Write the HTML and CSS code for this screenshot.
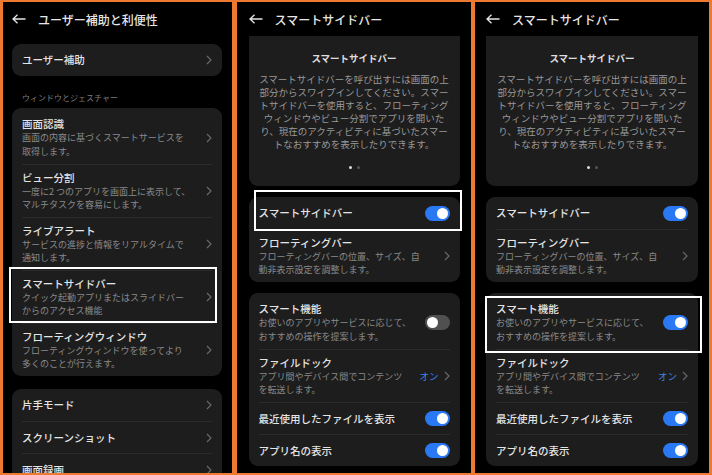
FILE: index.html
```html
<!DOCTYPE html>
<html lang="ja">
<head>
    <meta charset="UTF-8">
    <meta name="viewport" content="width=device-width, initial-scale=1.0">
    <title>スマートサイドバー</title>
    <link rel="stylesheet" href="styles.css">
</head>
<body>
<div class="frame">
    <!-- 1枚目: ユーザー補助と利便性 -->
    <section class="phone phone-a">
        <header class="bar">
            <svg class="back" viewBox="0 0 14 10"><path d="M13.5 5H1M5.5 0.7L1 5l4.5 4.3"/></svg>
            <h1>ユーザー補助と利便性</h1>
        </header>
        <div class="card first">
            <div class="row one"><span class="title">ユーザー補助</span><svg class="chev" viewBox="0 0 6 10"><path d="M1 1l4 4-4 4"/></svg></div>
        </div>
        <p class="group">ウィンドウとジェスチャー</p>
        <div class="card">
            <div class="row two">
                <div class="text"><div class="title">画面認識</div><div class="sub">画面の内容に基づくスマートサービスを<br>取得します。</div></div>
                <svg class="chev" viewBox="0 0 6 10"><path d="M1 1l4 4-4 4"/></svg>
            </div>
            <div class="row two">
                <div class="text"><div class="title">ビュー分割</div><div class="sub">一度に2 つのアプリを画面上に表示して、<br>マルチタスクを容易にします。</div></div>
                <svg class="chev" viewBox="0 0 6 10"><path d="M1 1l4 4-4 4"/></svg>
            </div>
            <div class="row two">
                <div class="text"><div class="title">ライブアラート</div><div class="sub">サービスの進捗と情報をリアルタイムで<br>通知します。</div></div>
                <svg class="chev" viewBox="0 0 6 10"><path d="M1 1l4 4-4 4"/></svg>
            </div>
            <div class="row two">
                <div class="text"><div class="title">スマートサイドバー</div><div class="sub">クイック起動アプリまたはスライドバー<br>からのアクセス機能</div></div>
                <svg class="chev" viewBox="0 0 6 10"><path d="M1 1l4 4-4 4"/></svg>
            </div>
            <div class="row two">
                <div class="text"><div class="title">フローティングウィンドウ</div><div class="sub">フローティングウィンドウを使ってより<br>多くのことが行えます。</div></div>
                <svg class="chev" viewBox="0 0 6 10"><path d="M1 1l4 4-4 4"/></svg>
            </div>
        </div>
        <div class="card wide-gap">
            <div class="row one"><span class="title">片手モード</span><svg class="chev" viewBox="0 0 6 10"><path d="M1 1l4 4-4 4"/></svg></div>
            <div class="row one"><span class="title">スクリーンショット</span><svg class="chev" viewBox="0 0 6 10"><path d="M1 1l4 4-4 4"/></svg></div>
            <div class="row one"><span class="title">画面録画</span><svg class="chev" viewBox="0 0 6 10"><path d="M1 1l4 4-4 4"/></svg></div>
        </div>
        <div class="mark mark-a"></div>
    </section>

    <!-- 2枚目: スマートサイドバー -->
    <section class="phone">
        <header class="bar">
            <svg class="back" viewBox="0 0 14 10"><path d="M13.5 5H1M5.5 0.7L1 5l4.5 4.3"/></svg>
            <h1>スマートサイドバー</h1>
        </header>
        <div class="intro">
            <div class="intro-title">スマートサイドバー</div>
            <p>スマートサイドバーを呼び出すには画面の上<br>部分からスワイプインしてください。スマー<br>トサイドバーを使用すると、フローティング<br>ウィンドウやビュー分割でアプリを開いた<br>り、現在のアクティビティに基づいたスマー<br>トなおすすめを表示したりできます。</p>
            <div class="dots"><i></i><i></i></div>
        </div>
        <div class="card">
            <div class="row one"><span class="title">スマートサイドバー</span><span class="switch"></span></div>
            <div class="row two">
                <div class="text"><div class="title">フローティングバー</div><div class="sub">フローティングバーの位置、サイズ、自<br>動非表示設定を調整します。</div></div>
                <svg class="chev" viewBox="0 0 6 10"><path d="M1 1l4 4-4 4"/></svg>
            </div>
        </div>
        <div class="card">
            <div class="row two">
                <div class="text"><div class="title">スマート機能</div><div class="sub">お使いのアプリやサービスに応じて、<br>おすすめの操作を提案します。</div></div>
                <span class="switch off"></span>
            </div>
            <div class="row two">
                <div class="text"><div class="title">ファイルドック</div><div class="sub">アプリ間やデバイス間でコンテンツ<br>を転送します。</div></div>
                <div class="trail"><span class="value">オン</span><svg class="chev" viewBox="0 0 6 10"><path d="M1 1l4 4-4 4"/></svg></div>
            </div>
            <div class="row one"><span class="title">最近使用したファイルを表示</span><span class="switch"></span></div>
            <div class="row one"><span class="title">アプリ名の表示</span><span class="switch"></span></div>
        </div>
        <div class="mark mark-b"></div>
    </section>

    <!-- 3枚目: スマート機能オン -->
    <section class="phone phone-c">
        <header class="bar">
            <svg class="back" viewBox="0 0 14 10"><path d="M13.5 5H1M5.5 0.7L1 5l4.5 4.3"/></svg>
            <h1>スマートサイドバー</h1>
        </header>
        <div class="intro">
            <div class="intro-title">スマートサイドバー</div>
            <p>スマートサイドバーを呼び出すには画面の上<br>部分からスワイプインしてください。スマー<br>トサイドバーを使用すると、フローティング<br>ウィンドウやビュー分割でアプリを開いた<br>り、現在のアクティビティに基づいたスマー<br>トなおすすめを表示したりできます。</p>
            <div class="dots"><i></i><i></i></div>
        </div>
        <div class="card">
            <div class="row one"><span class="title">スマートサイドバー</span><span class="switch"></span></div>
            <div class="row two">
                <div class="text"><div class="title">フローティングバー</div><div class="sub">フローティングバーの位置、サイズ、自<br>動非表示設定を調整します。</div></div>
                <svg class="chev" viewBox="0 0 6 10"><path d="M1 1l4 4-4 4"/></svg>
            </div>
        </div>
        <div class="card">
            <div class="row two">
                <div class="text"><div class="title">スマート機能</div><div class="sub">お使いのアプリやサービスに応じて、<br>おすすめの操作を提案します。</div></div>
                <span class="switch"></span>
            </div>
            <div class="row two">
                <div class="text"><div class="title">ファイルドック</div><div class="sub">アプリ間やデバイス間でコンテンツ<br>を転送します。</div></div>
                <div class="trail"><span class="value">オン</span><svg class="chev" viewBox="0 0 6 10"><path d="M1 1l4 4-4 4"/></svg></div>
            </div>
            <div class="row one"><span class="title">最近使用したファイルを表示</span><span class="switch"></span></div>
            <div class="row one"><span class="title">アプリ名の表示</span><span class="switch"></span></div>
        </div>
        <div class="mark mark-c"></div>
    </section>
</div>
</body>
</html>
```

FILE: styles.css
```css
*{
    box-sizing: border-box;
}
body{
    margin: 0;
    background-color: #ee7a31;
    font-family: "Noto Sans CJK JP", "Noto Sans", sans-serif;
}
.frame{
    height: 475px;
    padding: 2px 3px;
    display: flex;
    justify-content: space-between;
}

/* 端末画面 */
.phone{
    position: relative;
    width: 234px;
    height: 471px;
    overflow: hidden;
    background-color: #000;
    padding: 0 11px 0 12px;
}
.phone-a{
    width: 229px;
    padding: 0 10px 0 9px;
}
.phone-c{
    padding: 0 11px;
}

.bar{
    height: 34px;
    display: flex;
    align-items: center;
    gap: 12px;
    color: #e6e6e6;
}
.bar h1{
    margin: 0;
    font-size: 12px;
    font-weight: 500;
}
.back{
    width: 14px;
    height: 10px;
    flex: none;
    fill: none;
    stroke: #e6e6e6;
    stroke-width: 1.3;
}

/* カード */
.card{
    background-color: #1d1d1d;
    border-radius: 9px;
    margin-top: 11px;
}
.card.first{
    margin-top: 8px;
}
.card.wide-gap{
    margin-top: 13px;
}
.group{
    margin: 16px 10px 0;
    font-size: 8px;
    line-height: 12px;
    color: #7d7d7d;
}
.group + .card{
    margin-top: 4px;
}

.row{
    margin: 0 10px;
    display: flex;
    align-items: center;
    justify-content: space-between;
}
.row + .row{
    border-top: 1px solid #2b2b2b;
}
.row.one{
    height: 32px;
}
.row.two{
    height: 53px;
}
.row.two:first-child{
    height: 56px;
    padding-top: 3px;
}

.title{
    font-size: 10.5px;
    line-height: 14px;
    font-weight: 500;
    color: #e4e4e4;
}
.sub{
    font-size: 9px;
    line-height: 13.5px;
    color: #8a8a8a;
}
.chev{
    width: 6px;
    height: 10px;
    flex: none;
    fill: none;
    stroke: #6b6b6b;
    stroke-width: 1.1;
}
.trail{
    display: flex;
    align-items: center;
    gap: 5px;
}
.value{
    font-size: 9.5px;
    color: #3a86ee;
}

/* トグル */
.switch{
    position: relative;
    width: 25px;
    height: 15px;
    flex: none;
    border-radius: 8px;
    background-color: #2a79f4;
}
.switch::after{
    content: "";
    position: absolute;
    top: 2px;
    right: 2px;
    width: 11px;
    height: 11px;
    border-radius: 50%;
    background-color: #fff;
}
.switch.off{
    background-color: #505050;
}
.switch.off::after{
    right: auto;
    left: 2px;
}

/* 説明カード（上が切れている） */
.intro{
    height: 150px;
    padding: 15px 10px 0;
    background-color: #1d1d1d;
    border-radius: 0 0 9px 9px;
    text-align: center;
}
.intro-title{
    font-size: 9.5px;
    line-height: 14px;
    font-weight: 700;
    color: #dedede;
}
.intro p{
    margin: 8px 0 0;
    font-size: 9.5px;
    line-height: 13px;
    color: #999;
}
.dots{
    display: flex;
    justify-content: center;
    gap: 5px;
    margin-top: 15px;
}
.dots i{
    width: 3px;
    height: 3px;
    border-radius: 50%;
    background-color: #ddd;
}
.dots i + i{
    background-color: #555;
}

/* 白枠の強調 */
.mark{
    position: absolute;
    border: 2px solid #fff;
}
.mark-a{
    left: 6px;
    top: 265px;
    width: 208px;
    height: 56px;
}
.mark-b{
    left: 17px;
    top: 188px;
    width: 208px;
    height: 41px;
}
.mark-c{
    left: 10px;
    top: 294px;
    width: 217px;
    height: 57px;
}
```
